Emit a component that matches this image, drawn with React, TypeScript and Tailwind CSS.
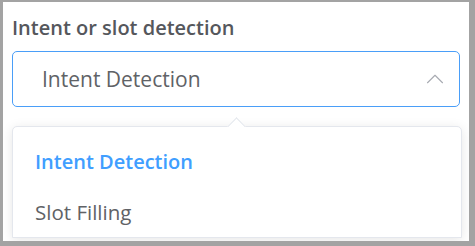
import { ChevronUp } from "lucide-react";

const options = ["Intent Detection", "Slot Filling"];

const App = () => {
  const selected = "Intent Detection";

  return (
    <div className="h-[246px] w-[475px] overflow-hidden bg-[#a3a3a3] pl-[3px] pr-[6px] pt-[2px] pb-[5px]">
      <div
        className="relative h-full w-full overflow-hidden bg-white pl-[9px] pt-[13px]"
        style={{ fontFamily: '"Open Sans", "Noto Sans", sans-serif' }}
      >
        {/* Label */}
        <div className="text-[20px] font-semibold leading-[26px] text-[#55575c]">
          Intent or slot detection
        </div>

        {/* Select input */}
        <div className="mt-[10px] flex h-[56px] w-[448px] items-center justify-between rounded-[5px] border border-[#4a9ef8] pl-[29px] pr-[9px]">
          <span className="text-[21px] leading-[26px] text-[#606266]">{selected}</span>
          <ChevronUp className="h-[30px] w-[30px] text-[#a8abb2]" strokeWidth={0.9} />
        </div>

        {/* Dropdown */}
        <div className="relative mt-[19px] w-[450px] rounded-t-[5px] border border-[#e4e7ed] bg-white pt-[10px] shadow-[0_2px_12px_rgba(0,0,0,0.1)]">
          <div className="absolute -top-[7px] left-[217px] h-[13px] w-[13px] rotate-45 border-l border-t border-[#e4e7ed] bg-white" />
          {options.map((opt) => (
            <div
              key={opt}
              className={
                opt === selected
                  ? "h-[50px] pl-[22px] text-[20px] font-semibold leading-[50px] text-[#409eff]"
                  : "h-[50px] pl-[22px] text-[20.5px] leading-[50px] text-[#606266]"
              }
            >
              {opt}
            </div>
          ))}
        </div>
      </div>
    </div>
  );
};

export default App;
